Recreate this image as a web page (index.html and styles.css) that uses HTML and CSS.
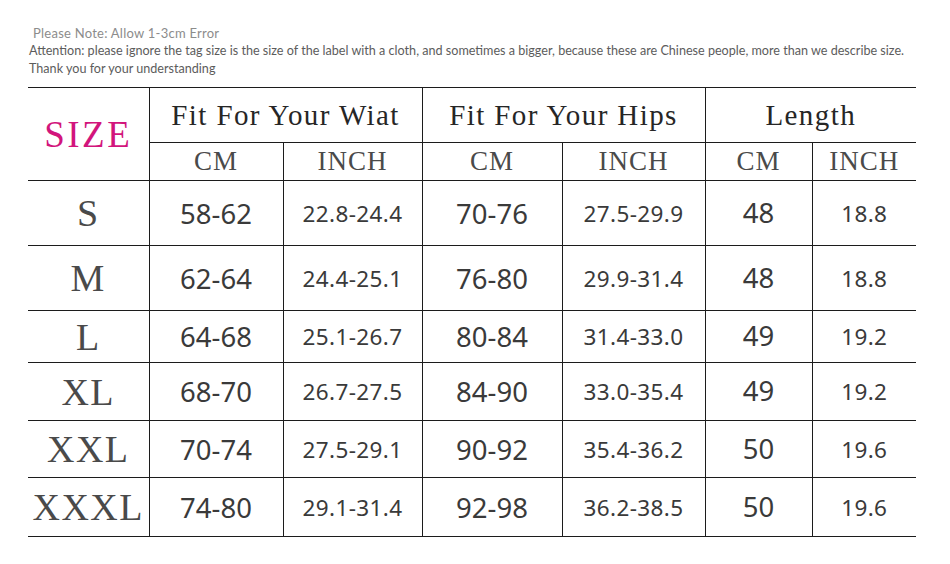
FILE: index.html
```html
<!DOCTYPE html>
<html>
<head>
<meta charset="utf-8">
<link rel="stylesheet" href="styles.css">
</head>
<body>
<div class="page">
  <div class="notes">
    <p class="note-first">Please Note: Allow 1-3cm Error</p>
    <p>Attention: please ignore the tag size is the size of the label with a cloth, and sometimes a bigger, because these are Chinese people, more than we describe size.</p>
    <p>Thank you for your understanding</p>
  </div>
  <table class="chart">
    <colgroup>
      <col class="c-size"><col class="c1"><col class="c2"><col class="c3"><col class="c4"><col class="c5"><col class="c6">
    </colgroup>
    <thead>
      <tr class="h1">
        <th rowspan="2" class="size-head">SIZE</th>
        <th colspan="2" class="group">Fit For Your Wiat</th>
        <th colspan="2" class="group">Fit For Your Hips</th>
        <th colspan="2" class="group group-len">Length</th>
      </tr>
      <tr class="h2">
        <th class="unit">CM</th><th class="unit">INCH</th>
        <th class="unit">CM</th><th class="unit">INCH</th>
        <th class="unit">CM</th><th class="unit">INCH</th>
      </tr>
    </thead>
    <tbody>
      <tr class="r-s"><td class="sz">S</td><td class="cm">58-62</td><td class="in">22.8-24.4</td><td class="cm">70-76</td><td class="in">27.5-29.9</td><td class="cm len">48</td><td class="in">18.8</td></tr>
      <tr class="r-m"><td class="sz">M</td><td class="cm">62-64</td><td class="in">24.4-25.1</td><td class="cm">76-80</td><td class="in">29.9-31.4</td><td class="cm len">48</td><td class="in">18.8</td></tr>
      <tr class="r-l"><td class="sz">L</td><td class="cm">64-68</td><td class="in">25.1-26.7</td><td class="cm">80-84</td><td class="in">31.4-33.0</td><td class="cm len">49</td><td class="in">19.2</td></tr>
      <tr class="r-xl"><td class="sz">XL</td><td class="cm">68-70</td><td class="in">26.7-27.5</td><td class="cm">84-90</td><td class="in">33.0-35.4</td><td class="cm len">49</td><td class="in">19.2</td></tr>
      <tr class="r-xxl"><td class="sz">XXL</td><td class="cm">70-74</td><td class="in">27.5-29.1</td><td class="cm">90-92</td><td class="in">35.4-36.2</td><td class="cm len">50</td><td class="in">19.6</td></tr>
      <tr class="r-xxxl"><td class="sz">XXXL</td><td class="cm">74-80</td><td class="in">29.1-31.4</td><td class="cm">92-98</td><td class="in">36.2-38.5</td><td class="cm len">50</td><td class="in">19.6</td></tr>
    </tbody>
  </table>
</div>
</body>
</html>
```
FILE: styles.css
```css
html, body {
  margin: 0;
  padding: 0;
  background: #fff;
}
.page {
  width: 950px;
  height: 564px;
  padding: 24px 0 0 28px;
  box-sizing: border-box;
}
.notes {
  font-family: Lato, "Open Sans", sans-serif;
  font-size: 12.6px;
  line-height: 18px;
  color: #5c5c5c;
  margin-bottom: 9px;
}
.notes p {
  margin: 0;
  white-space: nowrap;
  padding-left: 1px;
}
.notes .note-first {
  color: #8c8c8c;
  padding-left: 5px;
  font-size: 13px;
  letter-spacing: 0.25px;
}
.chart {
  border-collapse: collapse;
  table-layout: fixed;
  width: 888px;
}
.c-size { width: 121px; }
.c1 { width: 134px; }
.c2 { width: 139px; }
.c3 { width: 140px; }
.c4 { width: 143px; }
.c5 { width: 107px; }
.c6 { width: 104px; }
.chart th, .chart td {
  padding: 0;
  text-align: center;
  vertical-align: middle;
  border-top: 1px solid #1c1c1c;
  border-bottom: 1px solid #1c1c1c;
  border-left: 1px solid #1c1c1c;
  white-space: nowrap;
  overflow: hidden;
}
.chart th:first-child, .chart td:first-child {
  border-left: none;
}
.chart .h2 th:first-child {
  border-left: 1px solid #1c1c1c;
}
.h1 { height: 55px; }
.h2 { height: 38px; }
.size-head {
  font-family: "Liberation Serif", serif;
  font-weight: normal;
  font-size: 37px;
  color: #d2157c;
  letter-spacing: 2.5px;
  padding-top: 5px;
  padding-left: 2px;
}
.group {
  font-family: "Liberation Serif", serif;
  font-weight: normal;
  font-size: 29px;
  color: #262626;
  letter-spacing: 1.4px;
  padding-top: 4px;
}
.group-len {
  padding-top: 0;
  padding-bottom: 2px;
}
.unit {
  font-family: "Liberation Serif", serif;
  font-weight: normal;
  font-size: 27px;
  color: #4a4a4a;
  letter-spacing: 1px;
  padding-top: 4px;
}
.r-s, .r-m { height: 65px; }
.r-l { height: 52px; }
.r-xl { height: 58px; }
.r-xxl { height: 57px; }
.r-xxxl { height: 59px; }
.sz {
  font-family: "Liberation Serif", serif;
  font-size: 38px;
  color: #4a4a4a;
  letter-spacing: 1.5px;
  padding-top: 3px;
}
.cm {
  font-family: "Noto Sans", sans-serif;
  font-size: 27.5px;
  color: #3a3a3a;
  padding-top: 3px;
}
.cm.len {
  padding-top: 0;
  padding-bottom: 2px;
}
.in {
  font-family: "Noto Sans", sans-serif;
  font-size: 22.5px;
  letter-spacing: 0.4px;
  color: #3a3a3a;
  padding-top: 4px;
}
.r-xxxl .cm, .r-xxxl .in, .r-xxxl .sz {
  padding-top: 0;
}
```
